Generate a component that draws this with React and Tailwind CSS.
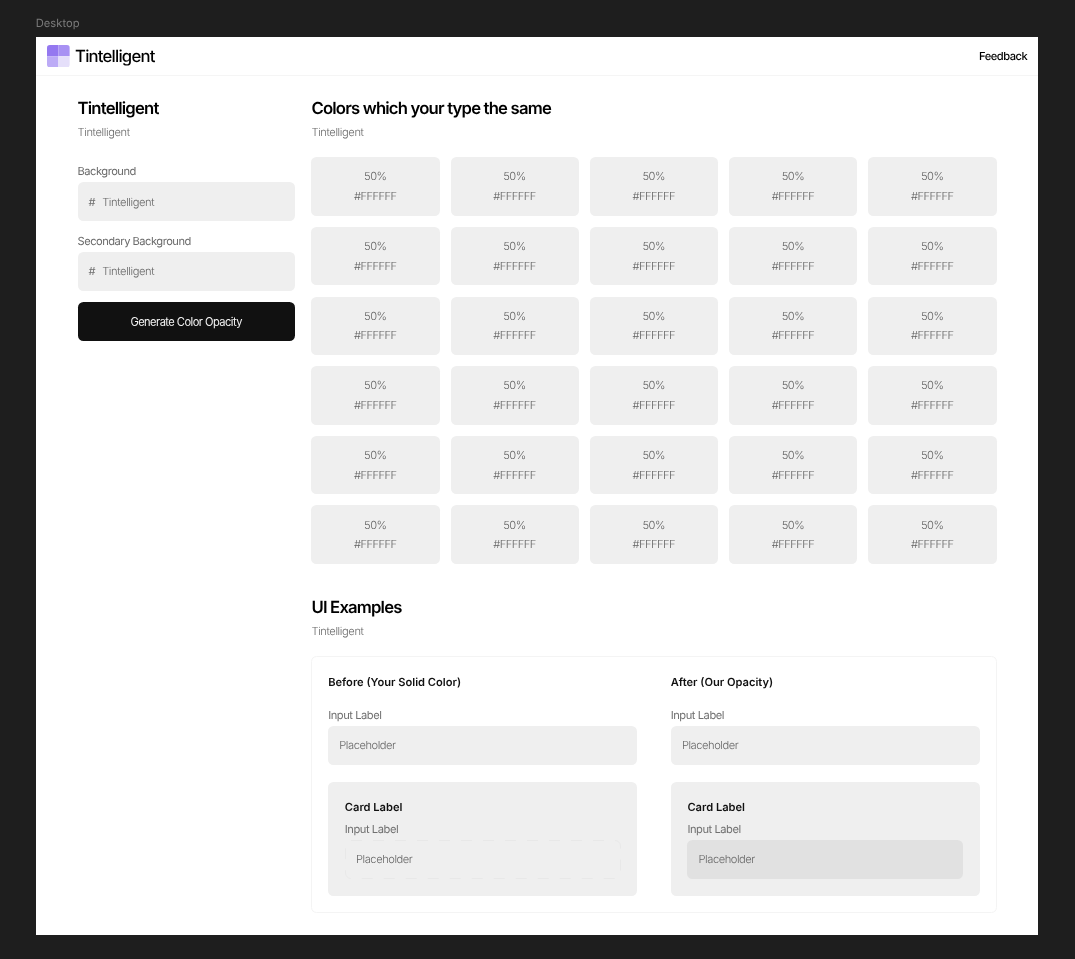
import React from "react";

const swatches = Array.from({ length: 30 }, (_, i) => ({ id: i, opacity: "50%", hex: "#FFFFFF" }));

function Logo() {
  return (
    <svg className="h-[22.4px] w-[22.8px] shrink-0" viewBox="0 0 32 32" preserveAspectRatio="none">
      <clipPath id="logo-clip">
        <rect width="32" height="32" rx="4" />
      </clipPath>
      <g clipPath="url(#logo-clip)">
        <rect width="16" height="16" fill="#9478f0" />
        <rect x="16" width="16" height="16" fill="#a891f3" />
        <rect y="16" width="16" height="16" fill="#bcabf6" />
        <rect x="16" y="16" width="16" height="16" fill="#e5dffa" />
      </g>
    </svg>
  );
}

function SectionTitle({ title }) {
  return (
    <div className="h-[59.2px]">
      <h2 className="h-[21px] pt-px text-[16.7px] leading-5 font-semibold tracking-[-0.049em] text-black">{title}</h2>
      <p className="mt-[5px] h-4 leading-4 font-light tracking-[-0.035em] text-[#696969]">Tintelligent</p>
    </div>
  );
}

function HexField({ label }) {
  return (
    <label className="block">
      <span className="block h-4 leading-4 tracking-[-0.045em] text-[#6b6b6b]">{label}</span>
      <span className="mt-[3px] flex h-[39px] items-center gap-[7px] rounded-[5.5px] bg-[#efefef] px-[11px] pt-[0.4px] text-[#6f6f6f]">
        <span>#</span>
        <span className="font-light tracking-[-0.035em] text-[#666]">Tintelligent</span>
      </span>
    </label>
  );
}

function Placeholder({ variant }) {
  if (variant === "outline") {
    return (
      <div className="relative mt-[3px] flex h-[39px] items-center px-[11.2px] pt-[0.6px] font-light text-[#666]">
        <svg className="absolute inset-0 h-full w-full" fill="none">
          <rect x="0.5" y="0.5" width="275" height="38" rx="5.5" stroke="#e8e8e8" strokeDasharray="11 11" />
        </svg>
        Placeholder
      </div>
    );
  }
  if (variant === "dark") {
    return (
      <div className="mt-[3px] flex h-[39px] items-center rounded-[5.5px] bg-[#e1e1e1] px-[11.2px] pt-[0.6px] font-light text-[#666]">
        Placeholder
      </div>
    );
  }
  return (
    <div className="mt-[3px] flex h-[39px] items-center rounded-[5.5px] bg-[#efefef] px-[11.2px] pt-[0.6px] font-light text-[#666]">
      Placeholder
    </div>
  );
}

function Example({ title, variant }) {
  return (
    <div className="min-w-0 flex-1">
      <h3 className="h-4 leading-4 font-semibold tracking-normal text-[#111]">{title}</h3>
      <div className="mt-[17.3px] h-4 leading-4 text-[#707070]">Input Label</div>
      <Placeholder />
      <div className="mt-[16.7px] h-[114px] rounded-[5.5px] bg-[#efefef] px-[16.7px] pt-[17px]">
        <h4 className="h-4 leading-4 font-semibold tracking-normal text-[#111]">Card Label</h4>
        <div className="mt-[6.4px] h-4 leading-4 text-[#707070]">Input Label</div>
        <Placeholder variant={variant} />
      </div>
    </div>
  );
}

export default function App() {
  return (
    <div className="flex h-[959px] w-[1075px] flex-col overflow-hidden bg-[#1e1e1e] pt-[15.3px] pr-[36.7px] pb-[24px] pl-[35.7px] font-['Inter',sans-serif] text-[11.14px] tracking-[-0.04em] antialiased will-change-transform [text-rendering:geometricPrecision]">
      <div className="h-[21.5px] text-[11.2px] leading-4 text-[#7a7a7a] tracking-[0.003em]">Desktop</div>
      <div className="flex-1 bg-white">
        <header className="flex h-[39px] items-center justify-between border-b border-[#f5f5f5] px-[11.2px]">
          <div className="flex items-center gap-[5.4px]">
            <Logo />
            <span className="pt-[1.6px] text-[16.7px] leading-5 font-medium tracking-[-0.047em] text-black">Tintelligent</span>
          </div>
          <a className="pt-[1.2px] font-medium tracking-[-0.045em] text-black">Feedback</a>
        </header>
        <main className="flex gap-[16.7px] px-[41.9px] pt-[22.3px]">
          <aside className="w-[217.2px] shrink-0">
            <SectionTitle title="Tintelligent" />
            <div className="flex flex-col gap-[11.6px] pt-[6px]">
              <HexField label="Background" />
              <HexField label="Secondary Background" />
              <button className="h-[39px] rounded-[5.5px] bg-[#111] pt-px tracking-[-0.05em] text-[#f4f4f4]">
                Generate Color Opacity
              </button>
            </div>
          </aside>
          <div className="w-[685.1px] shrink-0">
            <SectionTitle title="Colors which your type the same" />
            <div className="grid grid-cols-5 gap-[11.14px]">
              {swatches.map((s) => (
                <div
                  key={s.id}
                  className="flex h-[58.5px] flex-col items-center justify-center rounded-[5.5px] bg-[#efefef] pt-px pr-[0.6px] leading-[19.6px] font-light tracking-[-0.05em] text-[#626262]"
                >
                  <span>{s.opacity}</span>
                  <span>{s.hex}</span>
                </div>
              ))}
            </div>
            <div className="mt-[33.4px]">
              <SectionTitle title="UI Examples" />
            </div>
            <div className="flex h-[256.3px] gap-[33.4px] rounded-[5.5px] border border-[#f4f4f4] px-[15.7px] pt-[16.2px]">
              <Example title="Before (Your Solid Color)" variant="outline" />
              <Example title="After (Our Opacity)" variant="dark" />
            </div>
          </div>
        </main>
      </div>
    </div>
  );
}
